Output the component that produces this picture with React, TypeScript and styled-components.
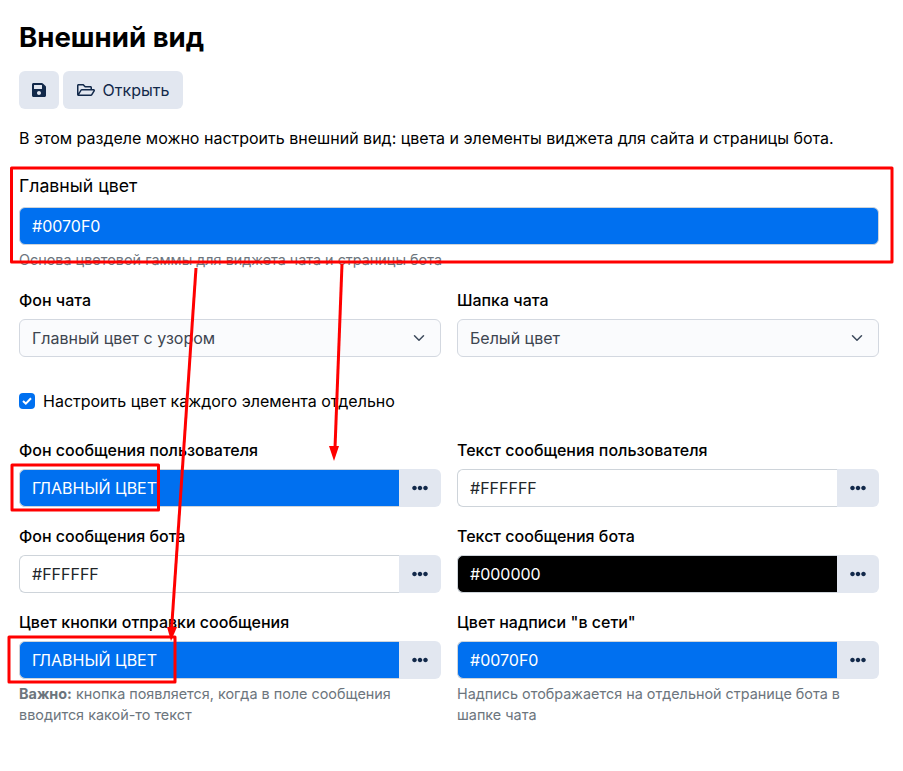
import styled, {createGlobalStyle} from "styled-components";
import {FaEllipsisH, FaRegFolderOpen, FaSave} from "react-icons/fa";
import {FiChevronDown} from "react-icons/fi";

const PRIMARY = "#0070F0";

const GlobalStyle = createGlobalStyle`
  * {
    box-sizing: border-box;
  }

  body {
    margin: 0;
    background: #fff;
    color: #000;
    font-family: Inter, "Liberation Sans", sans-serif;
    font-size: 16px;
    line-height: 24px;
  }
`

function ColorField({label, value, color = "#fff", text = "#212529"}: {
  label: string, value: string, color?: string, text?: string
}) {
  return (
    <Field>
      <Label>{label}</Label>
      <InputGroup>
        <ColorInput $color={color} $text={text}>{value}</ColorInput>
        <MoreButton><FaEllipsisH size={16}/></MoreButton>
      </InputGroup>
    </Field>
  )
}

function SelectField({label, value}: { label: string, value: string }) {
  return (
    <Field>
      <Label>{label}</Label>
      <Select>
        {value}
        <FiChevronDown size={18} color="#3d4a5c"/>
      </Select>
    </Field>
  )
}

// red markup drawn over the screenshot, not part of the form itself
function Annotations() {
  return (
    <Overlay width="903" height="771" viewBox="0 0 903 771">
      <g fill="none" stroke="#f00" strokeWidth="3" strokeLinejoin="round">
        <rect x="11.5" y="168" width="880.5" height="94"/>
        <rect x="12" y="465" width="146.5" height="45"/>
        <rect x="9" y="637" width="166" height="45"/>
        <path d="M196 268 L171.5 630"/>
        <path d="M342 264 L335 448"/>
      </g>
      <path d="M329 446 L339 446 L334 461 Z" fill="#f00"/>
      <path d="M167 627 L177 627 L171 641 Z" fill="#f00"/>
    </Overlay>
  )
}

export default function App() {
  return (
    <Page>
      <GlobalStyle/>
      <Title>Внешний вид</Title>
      <Toolbar>
        <ToolButton $square><FaSave size={16}/></ToolButton>
        <ToolButton><FaRegFolderOpen size={18}/>Открыть</ToolButton>
      </Toolbar>
      <Intro>В этом разделе можно настроить внешний вид: цвета и элементы виджета для сайта и страницы бота.</Intro>
      <MainField>
        <MainLabel>Главный цвет</MainLabel>
        <ColorInput $color={PRIMARY} $text="#fff" $alone>#0070F0</ColorInput>
        <Help>Основа цветовой гаммы для виджета чата и страницы бота</Help>
      </MainField>
      <SelectGrid>
        <SelectField label="Фон чата" value="Главный цвет с узором"/>
        <SelectField label="Шапка чата" value="Белый цвет"/>
      </SelectGrid>
      <CheckRow>
        <CheckBox>
          <svg width="10" height="8" viewBox="0 0 10 8" fill="none">
            <path d="M1 4 L3.8 6.6 L9 1.2" stroke="#fff" strokeWidth="2"/>
          </svg>
        </CheckBox>
        Настроить цвет каждого элемента отдельно
      </CheckRow>
      <ColorGrid>
        <ColorField label="Фон сообщения пользователя" value="ГЛАВНЫЙ ЦВЕТ" color={PRIMARY} text="#fff"/>
        <ColorField label="Текст сообщения пользователя" value="#FFFFFF"/>
        <ColorField label="Фон сообщения бота" value="#FFFFFF"/>
        <ColorField label="Текст сообщения бота" value="#000000" color="#000" text="#fff"/>
        <ColorField label="Цвет кнопки отправки сообщения" value="ГЛАВНЫЙ ЦВЕТ" color={PRIMARY} text="#fff"/>
        <ColorField label={'Цвет надписи "в сети"'} value="#0070F0" color={PRIMARY} text="#fff"/>
        <Help><b>Важно:</b> кнопка появляется, когда в поле сообщения вводится какой-то текст</Help>
        <Help>Надпись отображается на отдельной странице бота в шапке чата</Help>
      </ColorGrid>
      <Annotations/>
    </Page>
  )
}

const Page = styled.div`
  position: relative;
  width: 903px;
  height: 771px;
  overflow: hidden;
  padding: 18px 24px 0 19px;
`

const Title = styled.h1`
  margin: 0 0 15px;
  font-size: 27.6px;
  line-height: 38px;
  font-weight: 700;
`

const Toolbar = styled.div`
  display: flex;
  gap: 4px;
  margin-bottom: 17px;
`

const ToolButton = styled.div<{ $square?: boolean }>`
  display: flex;
  align-items: center;
  justify-content: center;
  gap: 8px;
  width: ${p => p.$square ? "40px" : "120px"};
  height: 38px;
  border-radius: 6px;
  background: #e2e7f0;
  color: #12294a;
`

const Intro = styled.p`
  margin: 0 0 24px;
  line-height: 24px;
  white-space: nowrap;
`

const MainField = styled.div`
  margin-bottom: 18px;
`

const Field = styled.div`
  min-width: 0;
`

const Label = styled.div`
  margin-bottom: 7px;
  font-size: 16px;
  line-height: 24px;
  font-weight: 500;
`

const MainLabel = styled.div`
  margin-bottom: 9px;
  font-size: 17.7px;
  line-height: 24px;
  font-weight: 400;
`

const ColorInput = styled.div<{ $color: string, $text: string, $alone?: boolean }>`
  flex: 1;
  height: 38px;
  padding: 0 12px;
  border: 1px solid #ced4da;
  border-right-width: ${p => p.$alone ? "1px" : "0"};
  border-radius: ${p => p.$alone ? "6px" : "6px 0 0 6px"};
  background: ${p => p.$color};
  color: ${p => p.$text};
  line-height: 36px;
`

const InputGroup = styled.div`
  display: flex;
  height: 38px;
`

const MoreButton = styled.div`
  display: flex;
  align-items: center;
  justify-content: center;
  width: 42px;
  border-radius: 0 6px 6px 0;
  background: #e2e7f0;
  color: #12294a;
`

const Help = styled.div`
  margin-top: 4px;
  color: #6c757d;
  font-size: 14.4px;
  line-height: 21px;

  b {
    font-weight: 700;
  }
`

const SelectGrid = styled.div`
  display: grid;
  grid-template-columns: 422px 422px;
  gap: 16px;
  margin-bottom: 32px;
`

const Select = styled.div`
  display: flex;
  align-items: center;
  justify-content: space-between;
  height: 38px;
  padding: 0 12px;
  border: 1px solid #d3d8e0;
  border-radius: 6px;
  background: #fafbfd;
  color: #3d4550;
`

const CheckRow = styled.div`
  display: flex;
  align-items: center;
  gap: 8px;
  height: 24px;
  margin-bottom: 25px;
  font-size: 16px;
`

const CheckBox = styled.span`
  display: flex;
  align-items: center;
  justify-content: center;
  width: 16px;
  height: 16px;
  border-radius: 4px;
  background: ${PRIMARY};
`

const ColorGrid = styled.div`
  display: grid;
  grid-template-columns: 422px 422px;
  column-gap: 16px;
  row-gap: 17px;

  ${Help} {
    margin-top: -13px;
  }
`

const Overlay = styled.svg`
  position: absolute;
  top: 0;
  left: 0;
  pointer-events: none;
`
